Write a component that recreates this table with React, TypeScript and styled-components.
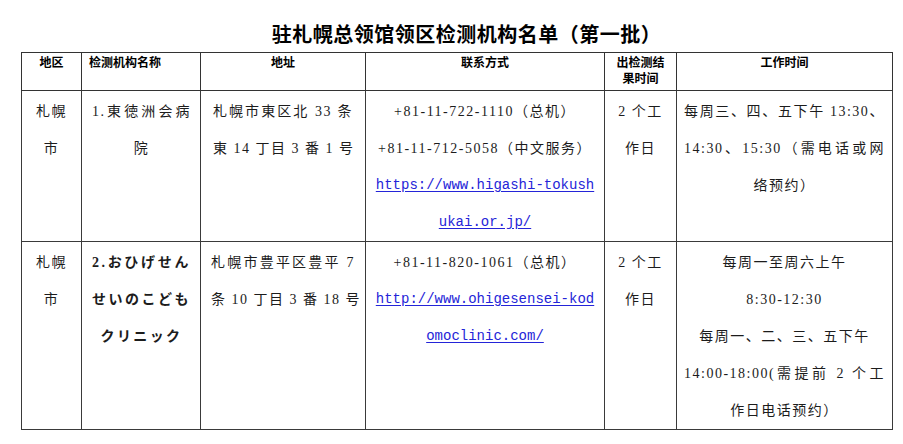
import styled, { createGlobalStyle } from "styled-components";

const GlobalStyle = createGlobalStyle`
  html, body {
    margin: 0;
    padding: 0;
    background: #fff;
  }
  body {
    font-family: "Liberation Serif", "Noto Sans CJK SC", serif;
    color: #1c1c1c;
  }
`;

const Page = styled.div`
  width: 903px;
  height: 444px;
  padding-left: 21px;
  box-sizing: border-box;
`;

const Title = styled.h1`
  margin: 0;
  width: 871px;
  height: 52px;
  box-sizing: border-box;
  padding: 20px 0 0 20px;
  text-align: center;
  font-family: "Noto Sans CJK SC", sans-serif;
  font-size: 20px;
  line-height: 28px;
  font-weight: 700;
  letter-spacing: 0.5px;
  color: #000;
`;

const Table = styled.table`
  width: 871px;
  border-collapse: collapse;
  table-layout: fixed;
`;

const HeadRow = styled.tr`
  height: 38px;
`;

const BodyRow = styled.tr<{ $h: number }>`
  height: ${(p) => p.$h}px;
`;

const Th = styled.th<{ $left?: boolean }>`
  border: 1px solid #333;
  vertical-align: top;
  padding: 1px ${(p) => (p.$left ? "0 0 7px" : "0")};
  text-align: ${(p) => (p.$left ? "left" : "center")};
  font-family: "Noto Sans CJK SC", sans-serif;
  font-size: 12px;
  line-height: 16px;
  font-weight: 700;
  color: #000;
`;

const Td = styled.td<{ $pl: number; $pr: number }>`
  border: 1px solid #3a3a3a;
  vertical-align: top;
  padding: 2px ${(p) => p.$pr}px 0 ${(p) => p.$pl}px;
  font-size: 14px;
  line-height: 37px;
  letter-spacing: 1.5px;
  white-space: nowrap;
`;

const Line = styled.div<{ $align?: "center" | "justify" | "left" }>`
  text-align: ${(p) => (p.$align === "justify" ? "justify" : p.$align || "center")};
  text-align-last: ${(p) => (p.$align === "justify" ? "justify" : "auto")};
`;

const Kana = styled(Line)`
  font-family: "Liberation Serif", "Noto Sans CJK JP", serif;
  font-weight: 700;
  letter-spacing: 2.4px;
`;

const Link = styled.a`
  display: block;
  text-align: center;
  font-family: "Liberation Mono", "Noto Sans CJK SC", monospace;
  letter-spacing: 0;
  color: #2424d8;
  text-decoration: underline;
  text-underline-offset: 2px;
`;

const widths = [60, 119, 165, 239, 72, 216];

export default function App() {
  return (
    <Page>
      <GlobalStyle />
      <Title>驻札幌总领馆领区检测机构名单（第一批）</Title>
      <Table>
        <colgroup>
          {widths.map((w, i) => (
            <col key={i} style={{ width: w }} />
          ))}
        </colgroup>
        <thead>
          <HeadRow>
            <Th>地区</Th>
            <Th $left>检测机构名称</Th>
            <Th>地址</Th>
            <Th>联系方式</Th>
            <Th>
              出检测结
              <br />
              果时间
            </Th>
            <Th>工作时间</Th>
          </HeadRow>
        </thead>
        <tbody>
          <BodyRow $h={150}>
            <Td $pl={6} $pr={6}>
              <Line>札幌</Line>
              <Line>市</Line>
            </Td>
            <Td $pl={10} $pr={9}>
              <Line $align="justify">1.東徳洲会病</Line>
              <Line>院</Line>
            </Td>
            <Td $pl={12} $pr={12}>
              <Line $align="justify">札幌市東区北 33 条</Line>
              <Line $align="justify">東 14 丁目 3 番 1 号</Line>
            </Td>
            <Td $pl={4} $pr={4}>
              <Line>+81-11-722-1110（总机）</Line>
              <Line>+81-11-712-5058（中文服务）</Line>
              <Link href="#">https://www.higashi-tokush</Link>
              <Link href="#">ukai.or.jp/</Link>
            </Td>
            <Td $pl={4} $pr={4}>
              <Line>2 个工</Line>
              <Line>作日</Line>
            </Td>
            <Td $pl={7} $pr={7}>
              <Line $align="justify">每周三、四、五下午 13:30、</Line>
              <Line $align="justify">14:30、15:30（需电话或网</Line>
              <Line>络预约）</Line>
            </Td>
          </BodyRow>
          <BodyRow $h={187}>
            <Td $pl={6} $pr={6}>
              <Line>札幌</Line>
              <Line>市</Line>
            </Td>
            <Td $pl={10} $pr={9}>
              <Kana $align="justify" lang="ja">2.おひげせん</Kana>
              <Kana $align="justify" lang="ja">せいのこども</Kana>
              <Kana lang="ja">クリニック</Kana>
            </Td>
            <Td $pl={10} $pr={10}>
              <Line $align="justify">札幌市豊平区豊平 7</Line>
              <Line $align="justify">条 10 丁目 3 番 18 号</Line>
            </Td>
            <Td $pl={4} $pr={4}>
              <Line>+81-11-820-1061（总机）</Line>
              <Link href="#">http://www.ohigesensei-kod</Link>
              <Link href="#">omoclinic.com/</Link>
            </Td>
            <Td $pl={4} $pr={4}>
              <Line>2 个工</Line>
              <Line>作日</Line>
            </Td>
            <Td $pl={7} $pr={7}>
              <Line>每周一至周六上午</Line>
              <Line>8:30-12:30</Line>
              <Line>每周一、二、三、五下午</Line>
              <Line $align="justify">14:00-18:00(需提前 2 个工</Line>
              <Line>作日电话预约）</Line>
            </Td>
          </BodyRow>
        </tbody>
      </Table>
    </Page>
  );
}
